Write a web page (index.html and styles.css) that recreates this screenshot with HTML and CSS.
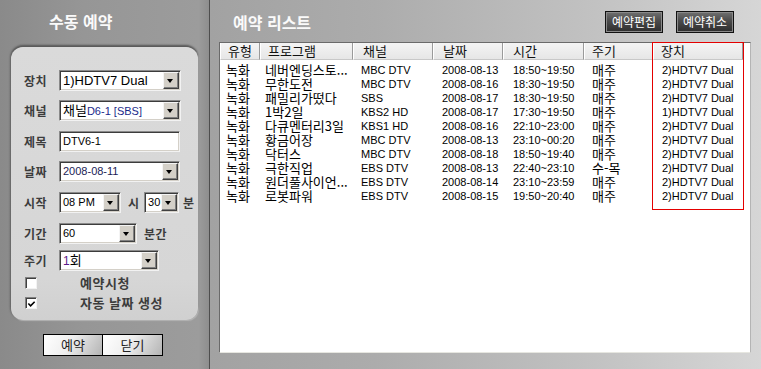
FILE: index.html
```html
<!DOCTYPE html>
<html lang="ko">
<head>
<meta charset="utf-8">
<title>예약</title>
<link rel="stylesheet" href="styles.css">
</head>
<body>
<div class="app">
  <div class="left">
    <div class="ltitle">수동 예약</div>
    <div class="panel">
      <div class="row r1"><span class="lbl">장치</span><div class="sel w122"><span class="val big">1)HDTV7 Dual</span><span class="arr"></span></div></div>
      <div class="row r2"><span class="lbl">채널</span><div class="sel w122"><span class="val"><span class="ko">채널</span><span class="blue">D6-1 [SBS]</span></span><span class="arr"></span></div></div>
      <div class="row r3"><span class="lbl">제목</span><div class="sel w121"><span class="val">DTV6-1</span></div></div>
      <div class="row r4"><span class="lbl">날짜</span><div class="sel w121"><span class="val navy">2008-08-11</span><span class="arr"></span></div></div>
      <div class="row r5"><span class="lbl">시작</span><div class="sel w62"><span class="val">08 PM</span><span class="arr"></span></div><span class="unit u1">시</span><div class="sel w35"><span class="val">30</span><span class="arr"></span></div><span class="unit u2">분</span></div>
      <div class="row r6"><span class="lbl">기간</span><div class="sel w78"><span class="val">60</span><span class="arr"></span></div><span class="unit u3">분간</span></div>
      <div class="row r7"><span class="lbl">주기</span><div class="sel w100"><span class="val"><span class="purple">1</span><span class="ko">회</span></span><span class="arr"></span></div></div>
      <div class="crow c1"><span class="cb"></span><span class="clbl">예약시청</span></div>
      <div class="crow c2"><span class="cb"><svg width="10" height="10" viewBox="0 0 10 10"><path d="M1.5 4.5 L4 7 L8.5 2.5" fill="none" stroke="#000" stroke-width="1.8"/></svg></span><span class="clbl">자동 날짜 생성</span></div>
    </div>
    <div class="btns"><button class="lbtn">예약</button><button class="lbtn">닫기</button></div>
  </div>
  <div class="divider"></div>
  <div class="right">
    <div class="rhead">
      <span class="rtitle">예약 리스트</span>
      <div class="tbtns"><button class="dbtn">예약편집</button><button class="dbtn">예약취소</button></div>
    </div>
    <div class="list">
      <div class="lhead">
        <span class="h h1">유형</span><span class="h h2">프로그램</span><span class="h h3">채널</span><span class="h h4">날짜</span><span class="h h5">시간</span><span class="h h6">주기</span><span class="h h7">장치</span>
      </div>
      <div class="lbody">
        <div class="lrow"><span class="k">녹화</span><span class="k">네버엔딩스토...</span><span class="e">MBC DTV</span><span class="e">2008-08-13</span><span class="e">18:50~19:50</span><span class="k">매주</span><span class="e">2)HDTV7 Dual</span></div>
        <div class="lrow"><span class="k">녹화</span><span class="k">무한도전</span><span class="e">MBC DTV</span><span class="e">2008-08-16</span><span class="e">18:30~19:50</span><span class="k">매주</span><span class="e">2)HDTV7 Dual</span></div>
        <div class="lrow"><span class="k">녹화</span><span class="k">패밀리가떴다</span><span class="e">SBS</span><span class="e">2008-08-17</span><span class="e">18:30~19:50</span><span class="k">매주</span><span class="e">2)HDTV7 Dual</span></div>
        <div class="lrow"><span class="k">녹화</span><span class="k">1박2일</span><span class="e">KBS2 HD</span><span class="e">2008-08-17</span><span class="e">17:30~19:50</span><span class="k">매주</span><span class="e">1)HDTV7 Dual</span></div>
        <div class="lrow"><span class="k">녹화</span><span class="k">다큐멘터리3일</span><span class="e">KBS1 HD</span><span class="e">2008-08-16</span><span class="e">22:10~23:00</span><span class="k">매주</span><span class="e">2)HDTV7 Dual</span></div>
        <div class="lrow"><span class="k">녹화</span><span class="k">황금어장</span><span class="e">MBC DTV</span><span class="e">2008-08-13</span><span class="e">23:10~00:20</span><span class="k">매주</span><span class="e">2)HDTV7 Dual</span></div>
        <div class="lrow"><span class="k">녹화</span><span class="k">닥터스</span><span class="e">MBC DTV</span><span class="e">2008-08-18</span><span class="e">18:50~19:40</span><span class="k">매주</span><span class="e">2)HDTV7 Dual</span></div>
        <div class="lrow"><span class="k">녹화</span><span class="k">극한직업</span><span class="e">EBS DTV</span><span class="e">2008-08-13</span><span class="e">22:40~23:10</span><span class="k">수-목</span><span class="e">2)HDTV7 Dual</span></div>
        <div class="lrow"><span class="k">녹화</span><span class="k">원더풀사이언...</span><span class="e">EBS DTV</span><span class="e">2008-08-14</span><span class="e">23:10~23:59</span><span class="k">매주</span><span class="e">2)HDTV7 Dual</span></div>
        <div class="lrow"><span class="k">녹화</span><span class="k">로봇파워</span><span class="e">EBS DTV</span><span class="e">2008-08-15</span><span class="e">19:50~20:40</span><span class="k">매주</span><span class="e">2)HDTV7 Dual</span></div>
      </div>
      <div class="mark"></div>
    </div>
  </div>
</div>
</body>
</html>
```

FILE: styles.css
```css
* { box-sizing: border-box; }
html, body { margin: 0; padding: 0; }
body {
  width: 761px;
  height: 369px;
  overflow: hidden;
  font-family: "Liberation Sans", "Noto Sans CJK KR", sans-serif;
  background: #999;
}
.app { display: flex; width: 761px; height: 369px; }

/* left */
.left {
  width: 209px;
  height: 369px;
  padding-top: 12px;
  background: linear-gradient(to right, #8a8a8a 0%, #969696 40%, #9c9c9c 95%, #8e8e8e 100%);
}
.ltitle {
  height: 18px;
  line-height: 18px;
  padding-left: 49px;
  font-family: "Noto Sans CJK KR", sans-serif;
  font-weight: bold;
  font-size: 16px;
  color: #fafafa;
}
.panel {
  margin: 17px 11px 0 11px;
  width: 187px;
  height: 273px;
  border-radius: 12px;
  background: linear-gradient(to bottom, #dadada, #d6d6d6 85%, #d0d0d0);
  box-shadow: 0 -2px 2px 0 #5a5a5a, -1px -1px 2px #6a6a6a, 1px 1px 1px #b8b8b8;
  padding: 23px 0 0 13px;
}
.row { display: flex; align-items: center; height: 21px; }
.r2 { margin-top: 9px; }
.r3 { margin-top: 10px; }
.r4 { margin-top: 9px; }
.r5 { margin-top: 10px; }
.r6 { margin-top: 10px; }
.r7 { margin-top: 6px; }
.lbl {
  width: 35px;
  font-family: "Noto Sans CJK KR", sans-serif;
  font-weight: bold;
  font-size: 12px;
  line-height: 16px;
  color: #3c3c3c;
  letter-spacing: 0.5px;
}
.unit {
  font-family: "Noto Sans CJK KR", sans-serif;
  font-weight: bold;
  font-size: 12px;
  line-height: 16px;
  color: #3c3c3c;
}
.u1 { margin: 0 5px 0 7px; }
.u2 { margin-left: 4px; }
.u3 { margin-left: 7px; letter-spacing: 0.5px; }

.sel {
  display: flex;
  align-items: center;
  height: 21px;
  background: #fff;
  border: 1px solid;
  border-color: #8a8a8a #f2f2f2 #f2f2f2 #8a8a8a;
  box-shadow: inset 1px 1px 0 #3c3c3c, inset -1px -1px 0 #d4d0c8;
}
.w122 { width: 122px; }
.w121 { width: 121px; }
.w62 { width: 62px; }
.w35 { width: 35px; }
.w78 { width: 78px; }
.w100 { width: 100px; }
.val {
  flex: 1;
  padding-left: 3px;
  font-size: 11px;
  line-height: 17px;
  color: #000;
  white-space: nowrap;
}
.val.big { font-size: 13px; }
.ko { font-family: "Noto Sans CJK KR", sans-serif; font-size: 13px; line-height: 17px; }
.blue { color: #1a2a8a; }
.navy { color: #1b1b55; }
.purple { color: #5a1a8a; font-size: 12px; }
.arr {
  flex: none;
  width: 16px;
  height: 17px;
  margin-right: 1px;
  background: #d4d0c8;
  border: 1px solid;
  border-color: #f4f4f4 #404040 #404040 #f4f4f4;
  box-shadow: inset -1px -1px 0 #808080;
  position: relative;
}
.arr::after {
  content: "";
  position: absolute;
  left: 3px;
  top: 6px;
  border-top: 4px solid #000;
  border-left: 3.5px solid transparent;
  border-right: 3.5px solid transparent;
}

.crow { display: flex; align-items: center; height: 14px; }
.c1 { margin-top: 5px; }
.c2 { margin-top: 6px; }
.cb {
  width: 12px;
  height: 12px;
  margin-left: 1px;
  background: #fff;
  border: 1px solid;
  border-color: #808080 #f2f2f2 #f2f2f2 #808080;
  box-shadow: inset 1px 1px 0 #404040;
  display: flex;
  align-items: center;
  justify-content: center;
}
.cb svg { display: block; margin: 1px 0 0 1px; }
.clbl {
  margin-left: 43px;
  font-family: "Noto Sans CJK KR", sans-serif;
  font-weight: bold;
  font-size: 13px;
  line-height: 16px;
  color: #3c3c3c;
  letter-spacing: 0.5px;
}

.btns { display: flex; margin: 14px 0 0 43px; }
.lbtn {
  width: 60px;
  height: 22px;
  margin: 0;
  padding: 0;
  border: 1px solid #000;
  background: linear-gradient(120deg, #ffffff 0%, #eeeeee 45%, #b4b4b4 100%);
  font-family: "Noto Sans CJK KR", sans-serif;
  font-size: 13px;
  color: #222;
  line-height: 18px;
}
.lbtn + .lbtn { border-left: none; }

.divider { width: 1px; height: 369px; background: #4e4e4e; }

/* right */
.right {
  flex: 1;
  height: 369px;
  padding: 11px 0 0 9px;
  background: linear-gradient(to right, #a2a2a2 0%, #acacac 30%, #c2c2c2 70%, #d6d6d6 100%);
}
.rhead { display: flex; align-items: center; height: 22px; }
.rtitle {
  margin-left: 14px;
  font-family: "Noto Sans CJK KR", sans-serif;
  font-weight: bold;
  font-size: 16px;
  color: #fafafa;
  line-height: 22px;
}
.tbtns { margin-left: auto; margin-right: 27px; display: flex; gap: 13px; }
.dbtn {
  width: 58px;
  height: 22px;
  margin: 0;
  padding: 0;
  border: 1px solid #111;
  background: linear-gradient(to bottom, #707070 0%, #4a4a4a 45%, #2e2e2e 100%);
  box-shadow: inset 0 0 0 1px #8a8a8a;
  font-family: "Noto Sans CJK KR", sans-serif;
  font-size: 12px;
  color: #fff;
  line-height: 18px;
}

.list {
  position: relative;
  margin-top: 9px;
  width: 532px;
  height: 311px;
  background: #fff;
  border: 1px solid;
  border-color: #6a6a6a #b4b4b4 #e6e6e0 #6a6a6a;
  box-shadow: inset -4px 0 0 #fff;
}
.lhead {
  display: grid;
  grid-template-columns: 40px 93px 80px 70px 81px 69px 90px;
  height: 17px;
}
.h {
  display: block;
  height: 17px;
  background: linear-gradient(to bottom, #f4f4f4, #e6e6e6);
  border-left: 1px solid #fff;
  border-right: 1px solid #9a9a9a;
  border-bottom: 1px solid #c8c8c8;
  font-family: "Noto Sans CJK KR", sans-serif;
  font-size: 13px;
  line-height: 16px;
  color: #111;
  white-space: nowrap;
}
.h1 { padding-left: 7px; }
.h2 { padding-left: 7px; }
.h3 { padding-left: 9px; }
.h4 { padding-left: 9px; }
.h5 { padding-left: 9px; }
.h6 { padding-left: 7px; }
.h7 { padding-left: 7px; }
.lbody { padding: 3px 0 0 6px; }
.lrow {
  display: grid;
  grid-template-columns: 39px 96px 81px 71px 79px 70px 90px;
  height: 14px;
  line-height: 14px;
  white-space: nowrap;
  color: #000;
}
.lrow .k { font-family: "Noto Sans CJK KR", sans-serif; font-size: 13px; }
.lrow .e { font-family: "Liberation Sans", sans-serif; font-size: 11px; }
.mark {
  position: absolute;
  left: 432px;
  top: -1px;
  width: 92px;
  height: 168px;
  border: 1px solid #e40000;
}
```
